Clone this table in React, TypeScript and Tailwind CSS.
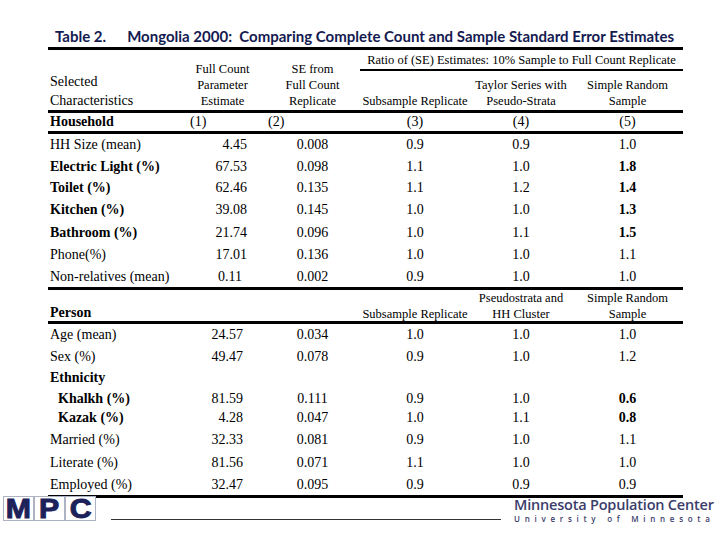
import React from "react";

interface Row {
  label: string;
  bold?: boolean;
  indent?: boolean;
  values?: string[];
  boldLast?: boolean;
  h: string;
  pr?: string;
}

const SERIF = "font-['Liberation_Serif','Times_New_Roman',serif]";
const COLS = "grid grid-cols-[132px_85px_95px_110px_102px_111px]";

const HOUSEHOLD: Row[] = [
  { label: "HH Size (mean)", values: ["4.45", "0.008", "0.9", "0.9", "1.0"], h: "h-[22px]" },
  { label: "Electric Light (%)", bold: true, values: ["67.53", "0.098", "1.1", "1.0", "1.8"], boldLast: true, h: "h-[21px]" },
  { label: "Toilet (%)", bold: true, values: ["62.46", "0.135", "1.1", "1.2", "1.4"], boldLast: true, h: "h-[22px]" },
  { label: "Kitchen (%)", bold: true, values: ["39.08", "0.145", "1.0", "1.0", "1.3"], boldLast: true, h: "h-[22px]" },
  { label: "Bathroom (%)", bold: true, values: ["21.74", "0.096", "1.0", "1.1", "1.5"], boldLast: true, h: "h-[23px]" },
  { label: "Phone(%)", values: ["17.01", "0.136", "1.0", "1.0", "1.1"], h: "h-[22px]" },
  { label: "Non-relatives (mean)", values: ["0.11", "0.002", "0.9", "1.0", "1.0"], h: "h-[21px]", pr: "pr-[23px]" },
];

const PERSON: Row[] = [
  { label: "Age (mean)", values: ["24.57", "0.034", "1.0", "1.0", "1.0"], h: "h-[22px]" },
  { label: "Sex (%)", values: ["49.47", "0.078", "0.9", "1.0", "1.2"], h: "h-[21px]" },
  { label: "Ethnicity", bold: true, h: "h-[22px]" },
  { label: "Khalkh (%)", bold: true, indent: true, values: ["81.59", "0.111", "0.9", "1.0", "0.6"], boldLast: true, h: "h-[19px]" },
  { label: "Kazak (%)", bold: true, indent: true, values: ["4.28", "0.047", "1.0", "1.1", "0.8"], boldLast: true, h: "h-[20px]" },
  { label: "Married (%)", values: ["32.33", "0.081", "0.9", "1.0", "1.1"], h: "h-[23px]" },
  { label: "Literate (%)", values: ["81.56", "0.071", "1.1", "1.0", "1.0"], h: "h-[23px]" },
  { label: "Employed (%)", values: ["32.47", "0.095", "0.9", "0.9", "0.9"], h: "h-[21px]" },
];

function DataRows({ rows, pr }: { rows: Row[]; pr: string }) {
  return (
    <>
      {rows.map((r) => (
        <div key={r.label} className={`${COLS} ${r.h} items-center text-[14px] leading-none`}>
          <div className={`${r.indent ? "pl-[10px]" : "pl-[2px]"} ${r.bold ? "font-bold" : ""} whitespace-nowrap`}>
            {r.label}
          </div>
          {r.values && (
            <>
              <div className={`text-right ${r.pr ?? pr}`}>{r.values[0]}</div>
              <div className="text-center">{r.values[1]}</div>
              <div className="text-center">{r.values[2]}</div>
              <div className="text-center">{r.values[3]}</div>
              <div className={`text-center ${r.boldLast ? "font-bold" : ""}`}>{r.values[4]}</div>
            </>
          )}
        </div>
      ))}
    </>
  );
}

function Rule({ thin }: { thin?: boolean }) {
  return <div className={thin ? "h-[2px] bg-black" : "h-[3px] bg-black"} />;
}

function MpcLogo() {
  return (
    <div className="flex font-['Liberation_Sans',Arial,sans-serif] font-bold text-[#1c2259]">
      {["M", "P", "C"].map((l) => (
        <div
          key={l}
          className="flex h-[25px] w-[31px] items-center justify-center border border-[#aeb3c4] bg-white"
        >
          <span className="inline-block scale-x-[1.12] text-[27px] leading-[22px] [-webkit-text-stroke:1px_#1c2259]">
            {l}
          </span>
        </div>
      ))}
    </div>
  );
}

export default function App() {
  return (
    <div className={`relative h-[540px] w-[720px] overflow-hidden bg-white text-black ${SERIF}`}>
      <div className="ml-[48px] w-[635px]">
        {/* title */}
        <div className="flex h-[47px] items-end pb-[1px] pl-[7px] font-['Lato',sans-serif] text-[15px] font-bold leading-[20px] text-[#141a50]">
          <span>Table 2.</span>
          <span className="ml-[21px] whitespace-nowrap">
            Mongolia 2000:&nbsp; Comparing Complete Count and Sample Standard Error Estimates
          </span>
        </div>
        <Rule />

        {/* column headers */}
        <div className={`${COLS} h-[60px] text-[12.5px] leading-[16px]`}>
          <div className="flex flex-col justify-end pl-[2px] text-[14px] leading-[19px]">
            <span>Selected</span>
            <span>Characteristics</span>
          </div>
          <div className="flex flex-col items-center justify-end pb-[1px]">
            <span>Full Count</span>
            <span>Parameter</span>
            <span>Estimate</span>
          </div>
          <div className="flex flex-col items-center justify-end pb-[1px]">
            <span>SE from</span>
            <span>Full Count</span>
            <span>Replicate</span>
          </div>
          <div className="col-span-3 flex flex-col">
            <div className="flex h-[19px] items-center justify-center whitespace-nowrap text-[12.5px]">
              Ratio of (SE) Estimates: 10% Sample to Full Count Replicate
            </div>
            <Rule thin />
            <div className="grid flex-1 grid-cols-[110px_102px_111px]">
              <div className="flex flex-col items-center justify-end pb-[1px] whitespace-nowrap">
                Subsample Replicate
              </div>
              <div className="flex flex-col items-center justify-end pb-[1px]">
                <span>Taylor Series with</span>
                <span>Pseudo-Strata</span>
              </div>
              <div className="flex flex-col items-center justify-end pb-[1px]">
                <span>Simple Random</span>
                <span>Sample</span>
              </div>
            </div>
          </div>
        </div>
        <Rule />

        {/* household */}
        <div className={`${COLS} h-[18px] items-end text-[14px] leading-[18px]`}>
          <div className="pl-[2px] font-bold">Household</div>
          <div className="pl-[10px]">(1)</div>
          <div className="pl-[3px]">(2)</div>
          <div className="text-center">(3)</div>
          <div className="text-center">(4)</div>
          <div className="text-center">(5)</div>
        </div>
        <Rule />
        <DataRows rows={HOUSEHOLD} pr="pr-[18px]" />
        <Rule />

        {/* person */}
        <div className={`${COLS} h-[31px] text-[12.5px] leading-[16px]`}>
          <div className="flex items-end pl-[2px] text-[14px] font-bold leading-[18px]">Person</div>
          <div />
          <div />
          <div className="flex flex-col items-center justify-end whitespace-nowrap">Subsample Replicate</div>
          <div className="flex flex-col items-center justify-end">
            <span>Pseudostrata and</span>
            <span>HH Cluster</span>
          </div>
          <div className="flex flex-col items-center justify-end">
            <span>Simple Random</span>
            <span>Sample</span>
          </div>
        </div>
        <Rule />
        <DataRows rows={PERSON} pr="pr-[22px]" />
        <Rule />
      </div>

      {/* footer */}
      <div className="mt-[-2px] flex items-start">
        <div className="ml-[3px]">
          <MpcLogo />
        </div>
        <div className="ml-[15px] mt-[23px] h-[1px] w-[390px] bg-[#333]" />
        <div className="ml-[13px] mt-[-1px] flex flex-col font-['Open_Sans',sans-serif] text-[#3b3d6b]">
          <span className="whitespace-nowrap text-[14.5px] font-semibold leading-[19px] tracking-[-0.2px]">
            Minnesota Population Center
          </span>
          <span className="whitespace-nowrap text-[8px] font-semibold leading-[10px] tracking-[0.59em]">
            University of Minnesota
          </span>
        </div>
      </div>
    </div>
  );
}
